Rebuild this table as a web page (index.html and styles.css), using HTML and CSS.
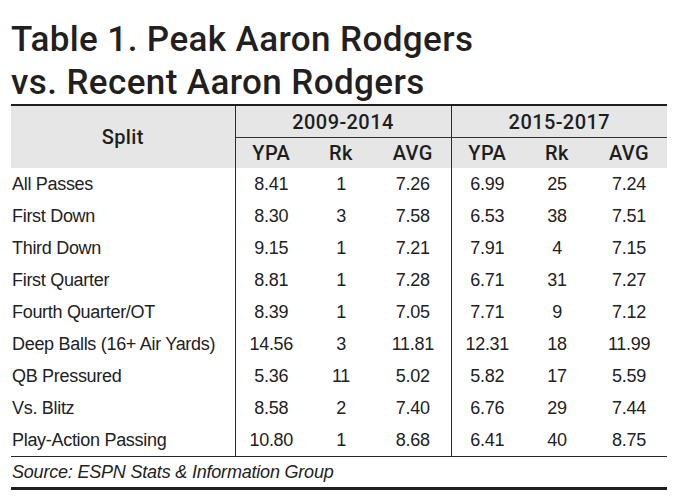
FILE: index.html
```html
<!DOCTYPE html>
<html>
<head>
<meta charset="utf-8">
<link rel="stylesheet" href="styles.css">
</head>
<body>
<div class="page">
  <h1 class="title">Table 1. Peak Aaron Rodgers<br>vs. Recent Aaron Rodgers</h1>
  <table class="stats">
    <colgroup>
      <col class="c-split">
      <col class="c-ypa"><col class="c-rk"><col class="c-avg">
      <col class="c-ypa"><col class="c-rk"><col class="c-avg">
    </colgroup>
    <thead>
      <tr class="h1">
        <th rowspan="2" class="split">Split</th>
        <th colspan="3" class="grp g1">2009-2014</th>
        <th colspan="3" class="grp g2">2015-2017</th>
      </tr>
      <tr class="h2">
        <th class="g1">YPA</th><th>Rk</th><th>AVG</th>
        <th class="g2">YPA</th><th>Rk</th><th>AVG</th>
      </tr>
    </thead>
    <tbody>
      <tr><td class="label">All Passes</td><td class="g1">8.41</td><td>1</td><td>7.26</td><td class="g2">6.99</td><td>25</td><td>7.24</td></tr>
      <tr><td class="label">First Down</td><td class="g1">8.30</td><td>3</td><td>7.58</td><td class="g2">6.53</td><td>38</td><td>7.51</td></tr>
      <tr><td class="label">Third Down</td><td class="g1">9.15</td><td>1</td><td>7.21</td><td class="g2">7.91</td><td>4</td><td>7.15</td></tr>
      <tr><td class="label">First Quarter</td><td class="g1">8.81</td><td>1</td><td>7.28</td><td class="g2">6.71</td><td>31</td><td>7.27</td></tr>
      <tr><td class="label">Fourth Quarter/OT</td><td class="g1">8.39</td><td>1</td><td>7.05</td><td class="g2">7.71</td><td>9</td><td>7.12</td></tr>
      <tr><td class="label">Deep Balls (16+ Air Yards)</td><td class="g1">14.56</td><td>3</td><td>11.81</td><td class="g2">12.31</td><td>18</td><td>11.99</td></tr>
      <tr><td class="label">QB Pressured</td><td class="g1">5.36</td><td>11</td><td>5.02</td><td class="g2">5.82</td><td>17</td><td>5.59</td></tr>
      <tr><td class="label">Vs. Blitz</td><td class="g1">8.58</td><td>2</td><td>7.40</td><td class="g2">6.76</td><td>29</td><td>7.44</td></tr>
      <tr class="last"><td class="label">Play-Action Passing</td><td class="g1">10.80</td><td>1</td><td>8.68</td><td class="g2">6.41</td><td>40</td><td>8.75</td></tr>
    </tbody>
    <tfoot>
      <tr><td colspan="7" class="source">Source: ESPN Stats &amp; Information Group</td></tr>
    </tfoot>
  </table>
</div>
</body>
</html>
```

FILE: styles.css
```css
html, body {
  margin: 0;
  padding: 0;
  background: #ffffff;
}

.page {
  width: 680px;
  height: 503px;
  padding-left: 11px;
  box-sizing: border-box;
  color: #222222;
}

.title {
  margin: 0;
  padding-top: 18px;
  font-family: Roboto, "Liberation Sans", sans-serif;
  font-weight: 500;
  font-size: 35px;
  line-height: 43px;
  color: #231f20;
  letter-spacing: 0.4px;
}

.stats {
  width: 656px;
  table-layout: fixed;
  border-collapse: collapse;
  border-spacing: 0;
  border-top: 2px solid #1e1e1e;
}

.c-split { width: 224px; }
.c-ypa { width: 72px; }
.c-rk { width: 68px; }
.c-avg { width: 76px; }

.stats th {
  font-family: Roboto, "Liberation Sans", sans-serif;
  font-weight: 500;
  font-size: 20px;
  letter-spacing: 0.4px;
  color: #1e1e1e;
  background: #e6e6e6;
  padding: 0;
  text-align: center;
  vertical-align: middle;
}

.stats .h1 th { height: 31px; }
.stats .h1 .grp { border-bottom: 1px solid #333333; }
.stats .h2 th { height: 30px; }

.stats .g1 { border-left: 1px solid #2a2a2a; }
.stats .g2 { border-left: 1px solid #2a2a2a; }

.stats td {
  font-family: "Liberation Sans", Arial, sans-serif;
  font-size: 18px;
  letter-spacing: -0.3px;
  color: #222222;
  height: 32px;
  padding: 0;
  text-align: center;
  vertical-align: middle;
}

.stats td.label {
  text-align: left;
  padding-left: 1px;
}

.stats .last td { border-bottom: 1px solid #2a2a2a; }

.stats td.source {
  height: 30px;
  text-align: left;
  padding-left: 1px;
  font-style: italic;
  letter-spacing: -0.2px;
  border-bottom: 3px solid #1e1e1e;
}
```
